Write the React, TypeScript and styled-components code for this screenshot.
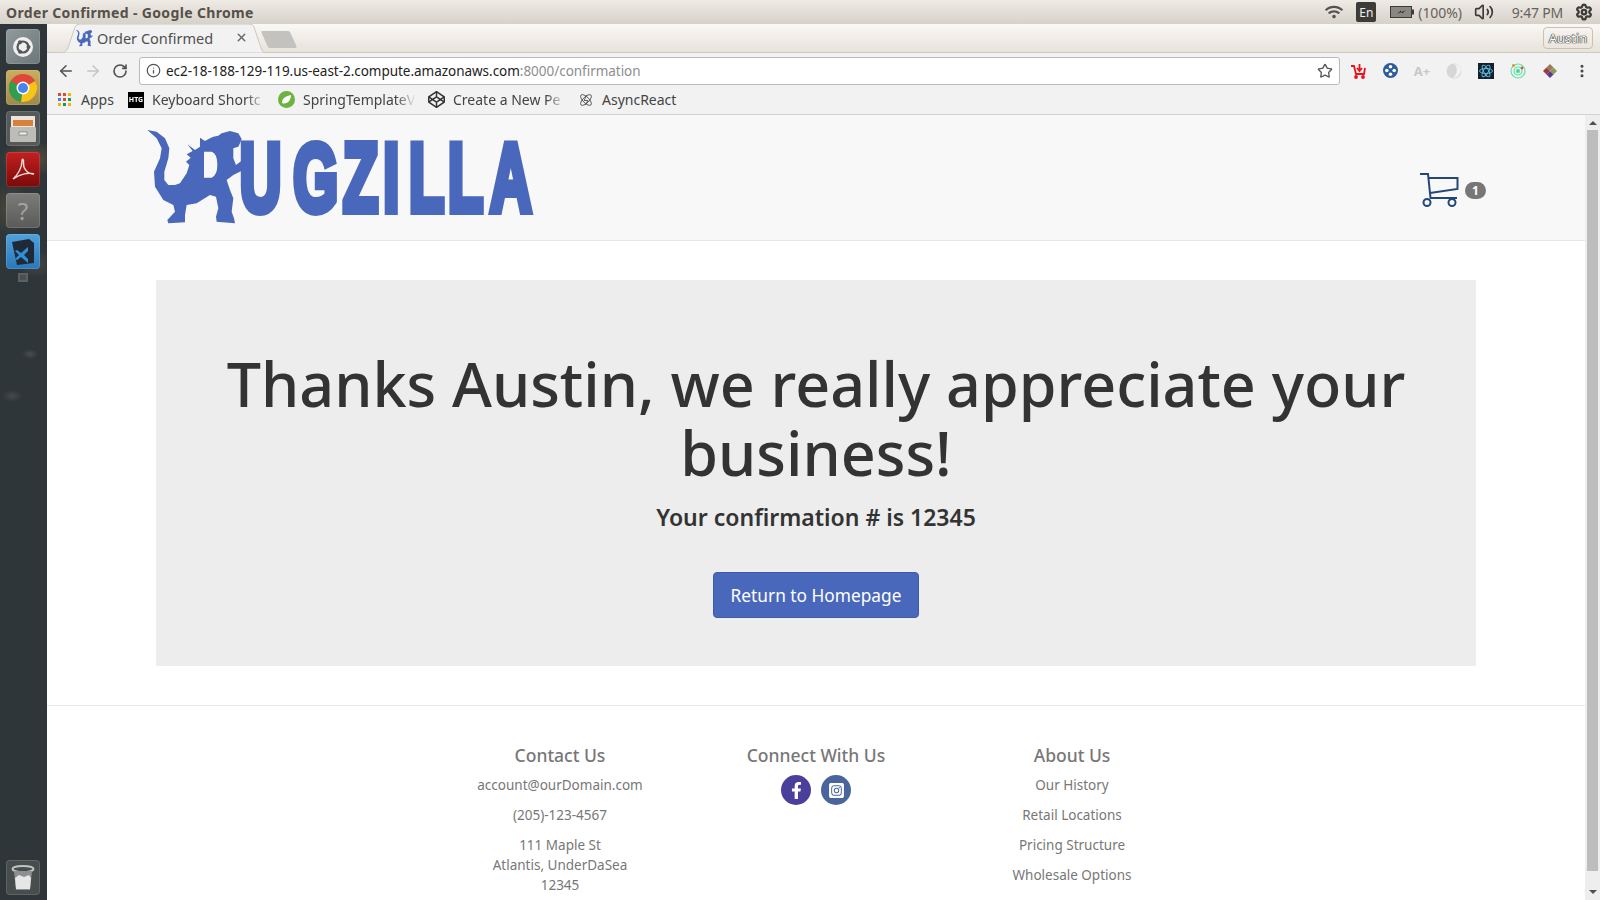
import React from "react";
import styled, { createGlobalStyle } from "styled-components";
import { ArrowLeft, ArrowRight, RotateCw, Star, X, Info, EllipsisVertical, Volume2, Settings } from "lucide-react";
import { FaFacebookF, FaInstagramSquare, FaCodepen, FaWifi } from "react-icons/fa";

const FONT = `"Noto Sans", "Open Sans", sans-serif`;
const BLUE = "#4a68bb";

const GODZILLA =
  "M52 45 L80 50 L105 70 L118 100 L115 130 L103 170 L103 195 L115 210 L135 210 L150 205 L160 190 L170 175 L178 150 L168 140 L182 128 L170 118 L188 108 L172 88 L195 105 L210 95 L210 68 L225 78 L240 70 L250 65 L265 62 L275 55 L300 48 L325 55 L335 72 L330 85 L325 95 L310 100 L310 130 L318 150 L338 135 L340 165 L310 180 L290 195 L300 225 L310 250 L305 290 L312 310 L315 325 L260 320 L258 305 L265 280 L258 245 L240 240 L200 265 L170 270 L165 300 L165 322 L115 325 L112 315 L135 290 L130 270 L100 255 L75 215 L72 170 L90 130 L95 100 L80 70 Z M222 110 L222 188 L245 188 Q262 180 262 150 Q262 115 245 110 Z";

const GlobalStyle = createGlobalStyle`
  html, body {
    margin: 0;
    padding: 0;
    width: 1600px;
    height: 900px;
    overflow: hidden;
    background: #2e3436;
    font-family: ${FONT};
  }
  * { box-sizing: border-box; }
`;

const Desktop = styled.div`
  width: 1600px;
  height: 900px;
  display: flex;
  flex-direction: column;
  overflow: hidden;
`;

const TitleBar = styled.div`
  height: 24px;
  flex: none;
  display: flex;
  align-items: center;
  padding: 0 7px 0 6px;
  background: linear-gradient(#efebe5, #d6d1c9);
  color: #55514a;
  font-size: 14px;
  font-weight: 700;
`;

const WindowTitle = styled.div`
  flex: 1;
  letter-spacing: 0.35px;
`;

const Tray = styled.div`
  display: flex;
  align-items: center;
  color: #65625c;
  font-size: 14px;
  font-weight: 400;
`;

const LangBox = styled.div`
  width: 20px;
  height: 20px;
  margin: 0 14px 0 13px;
  border-radius: 2px;
  background: #3c3b37;
  color: #f0f0f0;
  font-size: 12px;
  display: flex;
  align-items: center;
  justify-content: center;
`;

const Percent = styled.span`
  margin: 0 12px 0 4px;
  letter-spacing: -0.1px;
`;

const Clock = styled.span`
  margin: 0 12px 0 18px;
  letter-spacing: -0.2px;
`;

const Below = styled.div`
  flex: 1;
  min-height: 0;
  display: flex;
`;

const Launcher = styled.div`
  width: 47px;
  flex: none;
  display: flex;
  flex-direction: column;
  align-items: center;
  gap: 6px;
  padding: 5px 1px 5px 0;
  background:
    radial-gradient(ellipse 30px 18px at 30px 135px, #7a653f99, transparent),
    radial-gradient(ellipse 22px 26px at 10px 185px, #6b5a3c77, transparent),
    radial-gradient(ellipse 18px 14px at 36px 240px, #5e564877, transparent),
    radial-gradient(ellipse 8px 5px at 30px 330px, #4a4e4d, transparent),
    radial-gradient(ellipse 10px 6px at 12px 372px, #464a4a, transparent),
    #2f3639;
`;

const LaunchTile = styled.div<{ $bg: string }>`
  width: 34px;
  height: 35px;
  flex: none;
  border-radius: 4px;
  background: ${(p) => p.$bg};
  display: flex;
  align-items: center;
  justify-content: center;
  box-shadow: inset 0 0 0 1px #ffffff22;
`;

const HelpGlyph = styled.span`
  color: #a3a3a1;
  font-size: 24px;
`;

const LaunchMini = styled.div`
  width: 10px;
  height: 9px;
  flex: none;
  margin-top: -2px;
  background: #4b4f50;
  box-shadow: inset 0 0 0 2px #5c6061;
`;

const TrashTile = styled(LaunchTile)`
  margin-top: auto;
`;

const Browser = styled.div`
  flex: 1;
  min-width: 0;
  display: flex;
  flex-direction: column;
`;

const TabStrip = styled.div`
  height: 29px;
  flex: none;
  display: flex;
  align-items: flex-end;
  padding: 0 7px 0 14px;
  background: linear-gradient(#faf8f5, #e7e2da);
  border-bottom: 1px solid #cfc8bc;
`;

const Tab = styled.div`
  position: relative;
  width: 204px;
  height: 29px;
  margin-bottom: -1px;
  display: flex;
  align-items: center;
  padding: 0 17px 2px 14px;
  color: #505050;
  font-size: 14.5px;
`;

const TabShape = styled.svg`
  position: absolute;
  inset: 0;
`;

const TabLabel = styled.span`
  position: relative;
  flex: 1;
  margin-left: 4px;
`;

const TabClose = styled(X)`
  position: relative;
  color: #666;
`;

const NewTab = styled.div`
  width: 34px;
  height: 17px;
  margin: 0 0 4px -3px;
  background: #c4c2be;
  border-radius: 2px;
  transform: skewX(24deg) scaleX(0.85);
`;

const ProfileButton = styled.div`
  margin: 0 0 3px auto;
  width: 50px;
  height: 22px;
  border: 1px solid #c9c2b4;
  border-radius: 4px;
  display: flex;
  align-items: center;
  justify-content: center;
  color: #fff;
  font-size: 13px;
  text-shadow: 0 0 1px #222, 0 0 1px #222, 0 0 1px #222;
`;

const Toolbar = styled.div`
  height: 35px;
  flex: none;
  display: flex;
  align-items: center;
  padding-left: 5px;
  background: #f2f2f2;
`;

const NavButton = styled.div<{ $dim?: boolean }>`
  width: 27px;
  display: flex;
  justify-content: center;
  color: ${(p) => (p.$dim ? "#c4c4c4" : "#505050")};
`;

const Omnibox = styled.div`
  width: 1201px;
  height: 28px;
  margin-left: 6px;
  display: flex;
  align-items: center;
  padding: 0 6px;
  background: #fff;
  border: 1px solid #b9b9b9;
  border-radius: 3px;
  font-size: 13.5px;
  color: #222;
`;

const Url = styled.div`
  flex: 1;
  margin-left: 5px;
  letter-spacing: -0.03px;
`;

const UrlTail = styled.span`
  color: #8e8e8e;
`;

const Extensions = styled.div`
  display: flex;
  align-items: center;
  margin-left: 2px;
`;

const ExtSlot = styled.div`
  width: 32px;
  display: flex;
  justify-content: center;
  align-items: center;
  font-size: 10px;
`;

const ScoutMark = styled(ExtSlot)`
  color: #c8c8c8;
  font-weight: 700;
  font-size: 13px;
`;

const Bookmarks = styled.div`
  height: 27px;
  flex: none;
  display: flex;
  align-items: center;
  padding: 0 0 3px 11px;
  background: #f2f2f2;
  border-bottom: 1px solid #d3d3d3;
  color: #444;
  font-size: 14px;
`;

const Bookmark = styled.div<{ $width: number; $fade?: boolean }>`
  width: ${(p) => p.$width}px;
  flex: none;
  display: flex;
  align-items: center;
  gap: 8px;
  white-space: nowrap;
  ${(p) =>
    p.$fade &&
    "mask-image: linear-gradient(to right, #000 118px, transparent 138px);"}

  svg {
    flex: none;
  }
`;

const AppsGrid = styled.div`
  width: 13px;
  height: 13px;
  flex: none;
  margin-right: 2px;
  display: grid;
  grid-template-columns: repeat(3, 3px);
  gap: 2px;
`;

const AppsDot = styled.span<{ $c: string }>`
  background: ${(p) => p.$c};
`;

const HtgIcon = styled.div`
  width: 16px;
  height: 16px;
  flex: none;
  background: #000;
  color: #fff;
  font-size: 7px;
  font-weight: 700;
  display: flex;
  align-items: center;
  justify-content: center;
`;

const Viewport = styled.div`
  flex: 1;
  min-height: 0;
  display: flex;
  background: #fff;
`;

const Page = styled.div`
  flex: 1;
  min-width: 0;
  overflow: hidden;
`;

const ScrollBar = styled.div`
  width: 15px;
  flex: none;
  display: flex;
  flex-direction: column;
  align-items: center;
  background: #eeeeee;
`;

const ScrollArrow = styled.div<{ $down?: boolean }>`
  width: 0;
  height: 0;
  flex: none;
  margin: ${(p) => (p.$down ? "19px 0 6px" : "6px 0 0")};
  border-left: 4px solid transparent;
  border-right: 4px solid transparent;
  ${(p) =>
    p.$down ? "border-top: 4px solid #505050;" : "border-bottom: 4px solid #505050;"}
`;

const ScrollThumb = styled.div`
  flex: 1;
  width: 11px;
  margin-top: 5px;
  background: #bdbdbd;
`;

const Header = styled.header`
  height: 126px;
  display: flex;
  align-items: flex-start;
  justify-content: space-between;
  padding: 0 99px 0 83px;
  background: #f8f8f8;
  border-bottom: 1px solid #e7e7e7;
`;

const CartLink = styled.div`
  display: flex;
  align-items: center;
  gap: 6px;
  margin-top: 57px;
`;

const CartBadge = styled.span`
  width: 21px;
  height: 17px;
  border-radius: 10px;
  background: #777;
  color: #fff;
  font-size: 12px;
  font-weight: 700;
  display: flex;
  align-items: center;
  justify-content: center;
`;

const Jumbotron = styled.section`
  margin: 39px 109px 39px;
  height: 386px;
  padding-top: 69px;
  display: flex;
  flex-direction: column;
  align-items: center;
  background: #ededed;
  color: #333;
  text-align: center;
`;

const Thanks = styled.h1`
  margin: 0;
  font-size: 61px;
  font-weight: 500;
  line-height: 69px;
  width: 1240px;
`;

const Confirmation = styled.h3`
  margin: 14px 0 0;
  font-size: 23px;
  font-weight: 600;
  line-height: 33px;
`;

const HomeButton = styled.button`
  margin-top: 38px;
  width: 206px;
  height: 46px;
  background: ${BLUE};
  border: 1px solid #3f5aa8;
  border-radius: 4px;
  color: #fff;
  font-family: ${FONT};
  font-size: 17.3px;
`;

const Footer = styled.footer`
  border-top: 1px solid #e7e7e7;
  padding-top: 37px;
  display: grid;
  grid-template-columns: repeat(3, 256px);
  justify-content: center;
  color: #777;
  text-align: center;
`;

const FooterColumn = styled.div`
  display: flex;
  flex-direction: column;
  align-items: center;
`;

const FooterTitle = styled.h4`
  margin: 0 0 7px;
  font-size: 17.5px;
  font-weight: 500;
  line-height: 25px;
`;

const FooterLine = styled.p`
  margin: 0 0 10px;
  font-size: 13.5px;
  line-height: 20px;
`;

const Socials = styled.div`
  display: flex;
  gap: 10px;
`;

const SocialDot = styled.a<{ $bg: string }>`
  width: 30px;
  height: 30px;
  border-radius: 50%;
  background: ${(p) => p.$bg};
  color: #fff;
  font-size: 17px;
  display: flex;
  align-items: center;
  justify-content: center;
`;

const Godzilla = ({ size, fill }: { size: number; fill: string }) => (
  <svg width={size} height={size} viewBox="40 30 310 310" style={{ position: "relative", flex: "none" }}>
    <path d={GODZILLA} fill={fill} fillRule="evenodd" />
  </svg>
);

const Logo = () => (
  <svg width="420" height="125" viewBox="0 0 420 125">
    <g transform="scale(0.3333)">
      <path d={GODZILLA} fill={BLUE} fillRule="evenodd" />
    </g>
    <g transform="scale(0.6 1)">
      <text
        x="183 272 355 422 465 530 600"
        y="96"
        fontFamily="Liberation Sans, Arial, sans-serif"
        fontWeight="700"
        fontSize="96"
        fill={BLUE}
        stroke={BLUE}
        strokeWidth="8"
      >
        UGZILLA
      </text>
    </g>
  </svg>
);

const Cart = () => (
  <svg width="40" height="36" viewBox="0 0 40 36" fill="none" stroke="#24477a" strokeWidth="2">
    <path d="M1 2 H9 L11.5 26 H38" />
    <path d="M9.5 6 H38.5 V17 L11 21" />
    <circle cx="8" cy="30.5" r="3.5" />
    <circle cx="33" cy="30.5" r="3.5" />
  </svg>
);

const Battery = () => (
  <svg width="24" height="12" viewBox="0 0 24 12">
    <rect x="0.5" y="0.5" width="21" height="11" fill="#8a8780" stroke="#3c3b37" />
    <rect x="22" y="3.5" width="2" height="5" fill="#3c3b37" />
    <path d="M7 8 L12 5.5 V7.5 L16 4 L11 6.5 V4.5 Z" fill="#222" />
  </svg>
);

const UbuntuMark = () => (
  <svg width="22" height="22" viewBox="0 0 22 22">
    <circle cx="11" cy="11" r="10" fill="#eee" />
    <circle cx="11" cy="11" r="5.5" fill="none" stroke="#555" strokeWidth="2.2" />
    <circle cx="16.5" cy="11" r="2" fill="#555" />
    <circle cx="8" cy="6.2" r="2" fill="#555" />
    <circle cx="8" cy="15.8" r="2" fill="#555" />
  </svg>
);

const ChromeMark = () => (
  <svg width="30" height="30" viewBox="0 0 30 30">
    <circle cx="15" cy="15" r="14" fill="#e0463a" />
    <path d="M15 15 L2.9 8 A14 14 0 0 0 13 28.9 Z" fill="#2f9e4f" />
    <path d="M15 15 L27.1 8 A14 14 0 0 1 13 28.9 Z" fill="#f5c518" />
    <circle cx="15" cy="15" r="6.5" fill="#fff" />
    <circle cx="15" cy="15" r="5" fill="#4a84ea" />
  </svg>
);

const FilesMark = () => (
  <svg width="28" height="28" viewBox="0 0 28 28">
    <rect x="2" y="1" width="24" height="12" fill="#e9e5dc" />
    <rect x="4" y="5" width="20" height="6" fill="#d9803c" />
    <rect x="1" y="12" width="26" height="15" rx="1" fill="#bdbdb8" />
    <rect x="10" y="17" width="8" height="3" fill="#eee" stroke="#666" strokeWidth="0.6" />
  </svg>
);

const AcrobatMark = () => (
  <svg width="26" height="26" viewBox="0 0 26 26" fill="none" stroke="#f4dada" strokeWidth="1.4">
    <path d="M3 22 C8 18 12 10 12 4 C12 1 14 2 13.5 6 C13 11 17 17 24 17 C19 15 10 17 3 22 Z" />
  </svg>
);

const VsCodeMark = () => (
  <svg width="28" height="28" viewBox="0 0 28 28">
    <path d="M3 4 L20 1 L25 5 L25 25 L8 27 Z" fill="#1f2a36" />
    <path d="M19 9 L12 15 L8 12 L6 13 L10 17 L6 21 L8 22 L12 19 L19 25 Z M19 13 V21 L15 17 Z" fill="#2f8fd8" fillRule="evenodd" />
  </svg>
);

const TrashMark = () => (
  <svg width="24" height="28" viewBox="0 0 24 28">
    <ellipse cx="12" cy="5" rx="10.5" ry="3" fill="none" stroke="#bfc2c2" strokeWidth="2" />
    <path d="M3 7 L5 26 H19 L21 7" fill="#8d9091" />
    <path d="M4 14 L8 11 L13 13 L18 11 L20 14 L19 25 H5 Z" fill="#e6e6e6" />
  </svg>
);

const SpringLeaf = () => (
  <svg width="17" height="17" viewBox="0 0 17 17">
    <circle cx="8.5" cy="8.5" r="8.5" fill="#6db33f" />
    <path d="M4 12 C4 7 8 5 13 4 C13 9 10 13 5.5 12.5 Z" fill="#fff" />
  </svg>
);

const ReactBolt = () => (
  <svg width="16" height="16" viewBox="0 0 16 16" fill="none" stroke="#555" strokeWidth="0.9">
    <ellipse cx="8" cy="8" rx="7" ry="3" transform="rotate(45 8 8)" />
    <ellipse cx="8" cy="8" rx="7" ry="3" transform="rotate(-45 8 8)" />
    <path d="M9 3 L6 8.5 H10 L7 13" />
  </svg>
);

const APPS_COLORS = ["#dd4b39", "#dd4b39", "#f4b400", "#4285f4", "#dd4b39", "#0f9d58", "#f4b400", "#0f9d58", "#f4b400"];

export default function App() {
  return (
    <Desktop>
      <GlobalStyle />
      <TitleBar>
        <WindowTitle>Order Confirmed - Google Chrome</WindowTitle>
        <Tray>
          <FaWifi size={18} color="#55534e" />
          <LangBox>En</LangBox>
          <Battery />
          <Percent>(100%)</Percent>
          <Volume2 size={20} color="#3c3b37" />
          <Clock>9:47 PM</Clock>
          <Settings size={18} color="#3c3b37" strokeWidth={3} />
        </Tray>
      </TitleBar>

      <Below>
        <Launcher>
          <LaunchTile $bg="linear-gradient(135deg, #8f9a9c, #6d7779)">
            <UbuntuMark />
          </LaunchTile>
          <LaunchTile $bg="linear-gradient(#c9ae5d, #9d8a4c)">
            <ChromeMark />
          </LaunchTile>
          <LaunchTile $bg="#55595a">
            <FilesMark />
          </LaunchTile>
          <LaunchTile $bg="linear-gradient(#c2201f, #7a0a0a)">
            <AcrobatMark />
          </LaunchTile>
          <LaunchTile $bg="linear-gradient(#7c7c7a, #5a5a59)">
            <HelpGlyph>?</HelpGlyph>
          </LaunchTile>
          <LaunchTile $bg="linear-gradient(#4fa2dc, #2b78b8)">
            <VsCodeMark />
          </LaunchTile>
          <LaunchMini />
          <TrashTile $bg="#474c4d">
            <TrashMark />
          </TrashTile>
        </Launcher>

        <Browser>
          <TabStrip>
            <Tab>
              <TabShape width="204" height="29" viewBox="0 0 204 29">
                <path d="M0 29 Q5 29 7 24 L14 3 Q15 0 19 0 H188 Q192 0 193 3 L200 24 Q202 29 204 29 Z" fill="#f2f2f2" stroke="#cfc8bc" />
              </TabShape>
              <Godzilla size={18} fill={BLUE} />
              <TabLabel>Order Confirmed</TabLabel>
              <TabClose size={13} strokeWidth={2.5} />
            </Tab>
            <NewTab />
            <ProfileButton>Austin</ProfileButton>
          </TabStrip>

          <Toolbar>
            <NavButton>
              <ArrowLeft size={18} />
            </NavButton>
            <NavButton $dim>
              <ArrowRight size={18} />
            </NavButton>
            <NavButton>
              <RotateCw size={16} strokeWidth={2.4} />
            </NavButton>
            <Omnibox>
              <Info size={15} color="#555" />
              <Url>
                ec2-18-188-129-119.us-east-2.compute.amazonaws.com<UrlTail>:8000/confirmation</UrlTail>
              </Url>
              <Star size={16} color="#555" />
            </Omnibox>
            <Extensions>
              <ExtSlot>
                <svg width="16" height="16" viewBox="0 0 16 16" fill="none" stroke="#e8141c" strokeWidth="1.8">
                  <path d="M1 3 H4 L6 11 H14 L15 5" />
                  <path d="M9.5 1 V7 M7 5 L9.5 8 L12 5" />
                  <circle cx="6" cy="14" r="1" fill="#e8141c" />
                  <circle cx="13" cy="14" r="1" fill="#e8141c" />
                </svg>
              </ExtSlot>
              <ExtSlot>
                <svg width="15" height="15" viewBox="0 0 15 15">
                  <circle cx="7.5" cy="7.5" r="7.5" fill="#2c5c9e" />
                  <circle cx="7.5" cy="3.8" r="1.8" fill="#fff" />
                  <circle cx="7.5" cy="11.2" r="1.8" fill="#fff" />
                  <circle cx="3.8" cy="7.5" r="1.8" fill="#fff" />
                  <circle cx="11.2" cy="7.5" r="1.8" fill="#fff" />
                </svg>
              </ExtSlot>
              <ScoutMark>A+</ScoutMark>
              <ExtSlot>
                <svg width="16" height="16" viewBox="0 0 16 16">
                  <circle cx="8" cy="8" r="7.5" fill="#d6d6d6" />
                  <path d="M8 1 C12 4 12 10 7 15 C10 15 15 12 15 7 C15 4 12 1 8 1 Z" fill="#f2f2f2" />
                </svg>
              </ExtSlot>
              <ExtSlot>
                <svg width="16" height="16" viewBox="0 0 16 16" fill="none" stroke="#5cc3e8" strokeWidth="0.9">
                  <rect width="16" height="16" fill="#15202b" stroke="none" />
                  <ellipse cx="8" cy="8" rx="6.5" ry="2.5" />
                  <ellipse cx="8" cy="8" rx="6.5" ry="2.5" transform="rotate(60 8 8)" />
                  <ellipse cx="8" cy="8" rx="6.5" ry="2.5" transform="rotate(-60 8 8)" />
                </svg>
              </ExtSlot>
              <ExtSlot>
                <svg width="16" height="16" viewBox="0 0 16 16" fill="none" stroke="#5fe3a8" strokeWidth="1.2">
                  <circle cx="8" cy="8" r="7" />
                  <circle cx="8" cy="8" r="4" />
                  <circle cx="8" cy="8" r="1.6" fill="#3fd08c" />
                  <circle cx="3.5" cy="2.5" r="1.4" fill="#f08a24" stroke="none" />
                  <circle cx="12" cy="5" r="1.4" fill="#e8503a" stroke="none" />
                </svg>
              </ExtSlot>
              <ExtSlot>
                <svg width="14" height="14" viewBox="0 0 14 14">
                  <path d="M7 0 L10.5 3.5 L7 7 L3.5 3.5 Z" fill="#9a7a5a" />
                  <path d="M10.5 3.5 L14 7 L10.5 10.5 L7 7 Z" fill="#8a9a5a" />
                  <path d="M3.5 3.5 L7 7 L3.5 10.5 L0 7 Z" fill="#a03a3a" />
                  <path d="M7 7 L10.5 10.5 L7 14 L3.5 10.5 Z" fill="#5a3a8a" />
                </svg>
              </ExtSlot>
              <ExtSlot>
                <EllipsisVertical size={16} color="#444" strokeWidth={2.5} />
              </ExtSlot>
            </Extensions>
          </Toolbar>

          <Bookmarks>
            <Bookmark $width={70}>
              <AppsGrid>
                {APPS_COLORS.map((c, i) => (
                  <AppsDot key={i} $c={c} />
                ))}
              </AppsGrid>
              Apps
            </Bookmark>
            <Bookmark $width={150} $fade>
              <HtgIcon>HTG</HtgIcon>
              Keyboard Shortc
            </Bookmark>
            <Bookmark $width={150} $fade>
              <SpringLeaf />
              SpringTemplateV
            </Bookmark>
            <Bookmark $width={150} $fade>
              <FaCodepen size={17} color="#333" />
              Create a New Pe
            </Bookmark>
            <Bookmark $width={120}>
              <ReactBolt />
              AsyncReact
            </Bookmark>
          </Bookmarks>

          <Viewport>
            <Page>
              <Header>
                <Logo />
                <CartLink>
                  <Cart />
                  <CartBadge>1</CartBadge>
                </CartLink>
              </Header>

              <Jumbotron>
                <Thanks>Thanks Austin, we really appreciate your business!</Thanks>
                <Confirmation>Your confirmation # is 12345</Confirmation>
                <HomeButton>Return to Homepage</HomeButton>
              </Jumbotron>

              <Footer>
                <FooterColumn>
                  <FooterTitle>Contact Us</FooterTitle>
                  <FooterLine>account@ourDomain.com</FooterLine>
                  <FooterLine>(205)-123-4567</FooterLine>
                  <FooterLine>
                    111 Maple St
                    <br />
                    Atlantis, UnderDaSea
                    <br />
                    12345
                  </FooterLine>
                </FooterColumn>
                <FooterColumn>
                  <FooterTitle>Connect With Us</FooterTitle>
                  <Socials>
                    <SocialDot $bg="#4a3f9b">
                      <FaFacebookF />
                    </SocialDot>
                    <SocialDot $bg="#4a659b">
                      <FaInstagramSquare />
                    </SocialDot>
                  </Socials>
                </FooterColumn>
                <FooterColumn>
                  <FooterTitle>About Us</FooterTitle>
                  <FooterLine>Our History</FooterLine>
                  <FooterLine>Retail Locations</FooterLine>
                  <FooterLine>Pricing Structure</FooterLine>
                  <FooterLine>Wholesale Options</FooterLine>
                </FooterColumn>
              </Footer>
            </Page>
            <ScrollBar>
              <ScrollArrow />
              <ScrollThumb />
              <ScrollArrow $down />
            </ScrollBar>
          </Viewport>
        </Browser>
      </Below>
    </Desktop>
  );
}
